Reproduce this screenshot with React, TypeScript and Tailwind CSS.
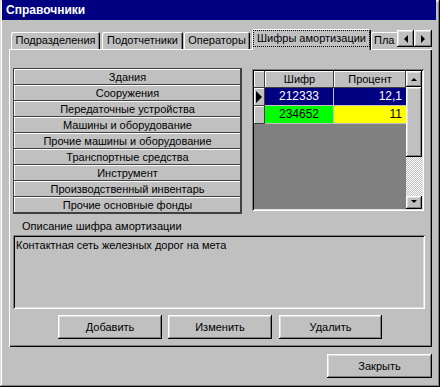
import { FC, ReactNode } from 'react';

const raised =
	'shadow-[inset_-1px_-1px_#000,inset_1px_1px_#fff,inset_-2px_-2px_#808080,inset_2px_2px_#dfdfdf]';
const sunken =
	'shadow-[inset_1px_1px_#808080,inset_-1px_-1px_#fff,inset_2px_2px_#000,inset_-2px_-2px_#dfdfdf]';
const tabShadow = 'shadow-[inset_1px_1px_#fff,inset_-1px_0_#000,inset_-2px_0_#808080]';

type Dir = 'up' | 'down' | 'left' | 'right';

const Arrow: FC<{ dir: Dir; size?: number }> = ({ dir, size = 4 }) => {
	const s = size;
	const points = {
		up: `0,${s} ${s * 2},${s} ${s},0`,
		down: `0,0 ${s * 2},0 ${s},${s}`,
		left: `${s},0 ${s},${s * 2} 0,${s}`,
		right: `0,0 0,${s * 2} ${s},${s}`,
	}[dir];
	const vertical = dir === 'up' || dir === 'down';
	return (
		<svg width={vertical ? s * 2 : s} height={vertical ? s : s * 2}>
			<polygon points={points} fill="#000" />
		</svg>
	);
};

const Button: FC<{ children: ReactNode; className?: string }> = ({ children, className = '' }) => (
	<button className={`flex items-center justify-center bg-[#c0c0c0] ${raised} ${className}`}>
		{children}
	</button>
);

const Tab: FC<{ label: string; width: string; active?: boolean }> = ({ label, width, active }) =>
	active ? (
		<div className={`relative z-10 ${width} h-[21px] bg-[#c0c0c0] rounded-t-[2px] ${tabShadow} flex items-center justify-center pb-[3px]`}>
			<span className="px-[3px] py-[1px] outline outline-1 outline-dotted outline-black">{label}</span>
		</div>
	) : (
		<div className={`${width} h-[17px] mb-px bg-[#c0c0c0] rounded-t-[2px] ${tabShadow} flex items-center justify-center whitespace-nowrap overflow-hidden`}>
			{label}
		</div>
	);

const categories = [
	'Здания',
	'Сооружения',
	'Передаточные устройства',
	'Машины и оборудование',
	'Прочие машины и оборудование',
	'Транспортные средства',
	'Инструмент',
	'Производственный инвентарь',
	'Прочие основные фонды',
];

const headerCell = 'h-[17px] bg-[#c0c0c0] shadow-[inset_-1px_-1px_#404040,inset_1px_1px_#fff] flex items-center justify-center';

const App: FC = () => {
	return (
		<div className={`w-[440px] h-[387px] bg-[#c0c0c0] flex flex-col font-['Liberation_Sans',Arial,sans-serif] text-[11px] leading-[13px] text-black shadow-[inset_-1px_-1px_#000,inset_1px_1px_#dfdfdf,inset_-2px_-2px_#808080,inset_2px_2px_#fff]`}>
			{/* title bar */}
			<div className="h-[20px] ml-[2px] mr-[4px] bg-[#000080] text-white font-bold text-[12px] flex items-center pl-[4px]">
				Справочники
			</div>

			{/* tabs */}
			<div className="relative h-[21px] mt-[9px] flex items-end pl-[11px] z-10">
				<Tab label="Подразделения" width="w-[89px]" />
				<div className="w-[2px]" />
				<Tab label="Подотчетники" width="w-[81px]" />
				<div className="w-px" />
				<Tab label="Операторы" width="w-[66px]" />
				<div className="w-[2px]" />
				<Tab label="Шифры амортизации" width="w-[119px]" active />
				<div className="w-[40px] h-[17px] mb-px bg-[#c0c0c0] rounded-t-[2px] shadow-[inset_1px_1px_#fff] pl-[3px] flex items-center whitespace-nowrap">
					Пла
				</div>
				<div className="absolute left-[397px] top-[1px] flex bg-[#c0c0c0]">
					<Button className="w-[17px] h-[17px]"><Arrow dir="left" /></Button>
					<Button className="w-[18px] h-[17px]"><Arrow dir="right" /></Button>
				</div>
			</div>

			{/* tab page */}
			<div className="ml-[9px] w-[423px] h-[298px] -mt-px shadow-[inset_1px_1px_#fff,inset_-1px_-1px_#000,inset_-2px_-2px_#808080] pt-[19px] pl-[4px] flex flex-col">
				<div className="flex items-start">
					{/* category list */}
					<div className="w-[229px] h-[146px] border border-[#404040] flex flex-col">
						{categories.map((c) => (
							<div
								key={c}
								className="h-[16px] shrink-0 bg-[#c0c0c0] shadow-[inset_-1px_-1px_#404040,inset_1px_1px_#fff] flex items-center justify-center whitespace-nowrap"
							>
								{c}
							</div>
						))}
					</div>

					{/* grid */}
					<div className={`ml-[10px] mt-px w-[172px] h-[142px] p-[2px] ${sunken} flex`}>
						<div className="w-[152px] bg-[#808080] flex flex-col">
							<div className="flex">
								<div className={`w-[11px] ${headerCell}`} />
								<div className={`w-[69px] ${headerCell}`}>Шифр</div>
								<div className={`w-[72px] ${headerCell}`}>Процент</div>
							</div>
							<div className="flex h-[18px]">
								<div className={`w-[11px] ${headerCell} h-[18px] justify-start pl-[2px]`}>
									<Arrow dir="right" size={6} />
								</div>
								<div className="w-[69px] bg-[#000080] text-white text-[12px] flex items-center justify-center border-r border-b border-[#c0c0c0]">
									212333
								</div>
								<div className="w-[72px] bg-[#000080] text-white text-[12px] flex items-center justify-end pr-[4px] border-b border-[#c0c0c0]">
									12,1
								</div>
							</div>
							<div className="flex h-[18px]">
								<div className={`w-[11px] ${headerCell} h-[18px]`} />
								<div className="w-[69px] bg-[#00ff00] text-[12px] flex items-center justify-center border-r border-b border-[#c0c0c0]">
									234652
								</div>
								<div className="w-[72px] bg-[#ffff00] text-[12px] flex items-center justify-end pr-[4px] border-b border-[#c0c0c0]">
									11
								</div>
							</div>
						</div>
						{/* scrollbar */}
						<div className="w-[16px] flex flex-col">
							<Button className="h-[16px] shrink-0"><Arrow dir="up" size={3} /></Button>
							<div className={`h-[70px] shrink-0 bg-[#c0c0c0] ${raised}`} />
							<div className="flex-1 bg-[image:repeating-conic-gradient(#fff_0%_25%,#c0c0c0_0%_50%)] bg-[length:2px_2px]" />
							<Button className="h-[13px] shrink-0 items-start pt-[4px]"><Arrow dir="down" size={3} /></Button>
						</div>
					</div>
				</div>

				<div className="mt-[6px] pl-[9px]">Описание шифра амортизации</div>
				<div className={`mt-[2px] w-[412px] h-[74px] bg-[#c0c0c0] ${sunken} pt-[4px] pl-[3px]`}>
					Контактная сеть железных дорог на мета
				</div>

				<div className="mt-[6px] ml-[45px] flex">
					<Button className="w-[104px] h-[24px]">Добавить</Button>
					<Button className="w-[104px] h-[24px] ml-[6px]">Изменить</Button>
					<Button className="w-[103px] h-[24px] ml-[7px]">Удалить</Button>
				</div>
			</div>

			<div className="mt-[7px] self-end mr-[8px]">
				<Button className="w-[105px] h-[24px]">Закрыть</Button>
			</div>
		</div>
	);
};

export default App;
